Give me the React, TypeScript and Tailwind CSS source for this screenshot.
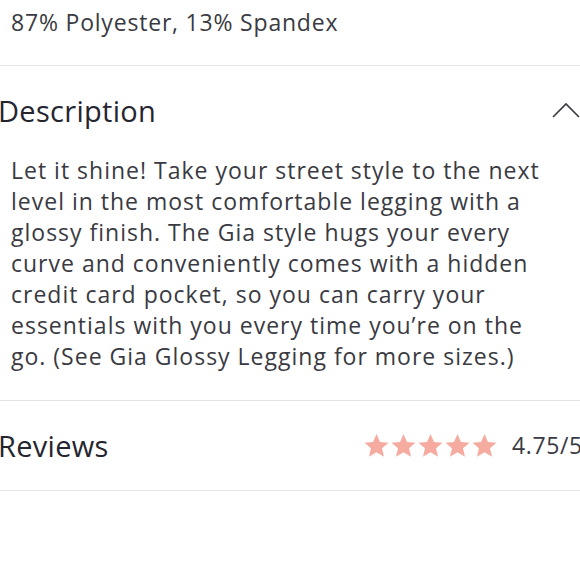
import React from "react";

const font = { fontFamily: '"Open Sans", "Noto Sans", Arial, sans-serif' };

const lines = [
    "Let it shine! Take your street style to the next",
    "level in the most comfortable legging with a",
    "glossy finish. The Gia style hugs your every",
    "curve and conveniently comes with a hidden",
    "credit card pocket, so you can carry your",
    "essentials with you every time you’re on the",
    "go. (See Gia Glossy Legging for more sizes.)",
];

function Star() {
    return (
        <svg viewBox="0 0 24 24" className="w-[27px] h-[27px]" fill="#f6aba0">
            <path d="M12 1.8l3.1 7.1 7.6.6-5.8 5 1.8 7.5L12 18l-6.7 4 1.8-7.5-5.8-5 7.6-.6z" />
        </svg>
    );
}

export default function App() {
    return (
        <div className="w-[580px] h-[579px] overflow-hidden bg-white" style={font}>
            <div className="w-[600px] -ml-[2px]">
                {/* Material */}
                <div className="pt-[7px] pb-[27px] pl-[13px] border-b border-[#e3e3e3]">
                    <p className="text-[23px] leading-[31px] tracking-[0.8px] text-[#3a3a42]">
                        87% Polyester, 13% Spandex
                    </p>
                </div>

                {/* Description */}
                <div className="h-[88px] flex items-center justify-between pr-[17px]">
                    <h2 className="text-[29px] leading-none tracking-[0.3px] text-[#25252f]">Description</h2>
                    <svg viewBox="0 0 30 18" className="w-[30px] h-[18px]" fill="none" stroke="#3a3a42" strokeWidth="1.6">
                        <path d="M2 16L15 3l13 13" />
                    </svg>
                </div>
                <div className="pt-[1px] pl-[13px] pb-[28px] border-b border-[#e3e3e3]">
                    <p className="text-[23px] leading-[31px] tracking-[1px] text-[#3a3a42]">
                        {lines.map((l) => (
                            <span key={l} className="block whitespace-nowrap">
                                {l}
                            </span>
                        ))}
                    </p>
                </div>

                {/* Reviews */}
                <div className="h-[90px] flex items-center border-b border-[#e3e3e3]">
                    <h2 className="text-[29px] leading-none tracking-[0.3px] text-[#25252f]">Reviews</h2>
                    <div className="ml-auto flex items-center">
                        <Star />
                        <Star />
                        <Star />
                        <Star />
                        <Star />
                    </div>
                    <span className="ml-[14px] w-[86px] whitespace-nowrap text-[23px] leading-none tracking-[0.6px] text-[#3a3a42]">
                        4.75/5
                    </span>
                </div>
            </div>
        </div>
    );
}
